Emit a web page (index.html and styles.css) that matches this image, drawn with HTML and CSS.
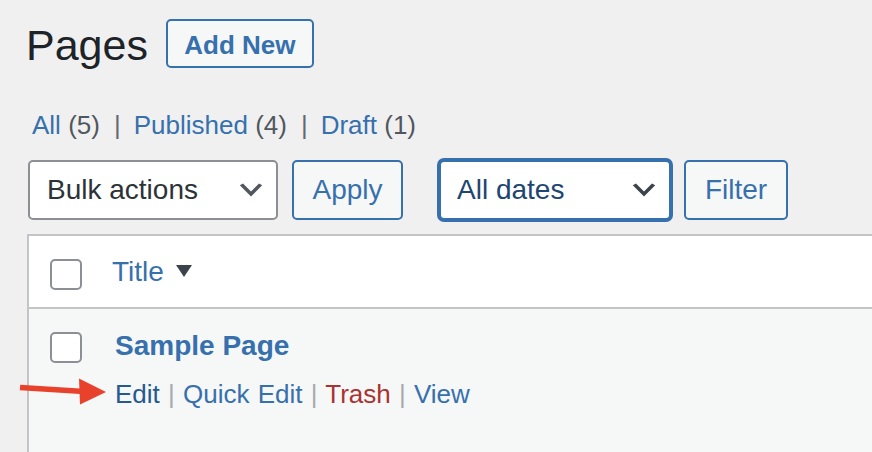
FILE: index.html
```html
<!DOCTYPE html>
<html lang="en">
<head>
<meta charset="utf-8">
<title>Pages</title>
<link rel="stylesheet" href="styles.css">
</head>
<body>
<div class="wrap">
  <div class="page-header">
    <h1 class="page-title">Pages</h1>
    <a class="btn-add">Add New</a>
  </div>
  <ul class="subsubsub">
    <li><a class="link">All</a> <span class="count">(5)</span></li>
    <li class="sep">|</li>
    <li><a class="link">Published</a> <span class="count">(4)</span></li>
    <li class="sep">|</li>
    <li><a class="link">Draft</a> <span class="count">(1)</span></li>
  </ul>
  <div class="tablenav">
    <div class="select bulk">
      <span>Bulk actions</span>
      <svg class="chev" viewBox="0 0 20 20" width="32" height="32"><path d="M5 6l5 5 5-5 2 1-7 7-7-7 2-1z"/></svg>
    </div>
    <button class="btn apply">Apply</button>
    <div class="select dates">
      <span>All dates</span>
      <svg class="chev" viewBox="0 0 20 20" width="32" height="32"><path d="M5 6l5 5 5-5 2 1-7 7-7-7 2-1z"/></svg>
    </div>
    <button class="btn filter">Filter</button>
  </div>
  <div class="table">
    <div class="thead">
      <span class="cb"></span>
      <a class="col-title">Title <svg class="caret" viewBox="0 0 16 12" width="16" height="12"><polygon points="0,0 16,0 8,12"/></svg></a>
    </div>
    <div class="row">
      <span class="cb"></span>
      <div class="row-main">
        <a class="row-title">Sample Page</a>
        <div class="row-actions"><a class="edit">Edit</a> | <a class="link">Quick Edit</a> | <a class="trash">Trash</a> | <a class="link">View</a></div>
      </div>
    </div>
  </div>
</div>
<svg class="arrow" viewBox="0 0 94 34" width="94" height="34">
  <line x1="4" y1="13.5" x2="68" y2="17.6" stroke="#e8412c" stroke-width="5.5"/>
  <polygon points="63,4.5 90,18 64,30.5" fill="#e8412c"/>
</svg>
</body>
</html>
```

FILE: styles.css
```css
html, body {
  margin: 0;
  padding: 0;
}

body {
  background: #f0f0f1;
  font-family: "Liberation Sans", Arial, sans-serif;
  color: #3c434a;
  overflow: hidden;
  width: 872px;
  height: 452px;
  position: relative;
}

.wrap {
  box-sizing: border-box;
  height: 452px;
  display: flex;
  flex-direction: column;
  padding: 19px 0 0 27px;
}

.page-header {
  display: flex;
  align-items: flex-start;
  height: 49px;
  flex: none;
}

.page-title {
  margin: 0 0 0 -1px;
  font-size: 43px;
  font-weight: 400;
  line-height: 52px;
  color: #1d2327;
}

.btn-add {
  box-sizing: border-box;
  height: 49px;
  width: 148px;
  margin-left: 18px;
  padding: 3px 0 0;
  border: 2px solid #3670ad;
  border-radius: 5px;
  background: #f6f7f7;
  color: #3670ad;
  font-size: 26px;
  font-weight: 700;
  line-height: 42px;
  text-align: center;
}

.subsubsub {
  list-style: none;
  margin: 42px 0 0 5px;
  padding: 0;
  display: flex;
  font-size: 26px;
  line-height: 30px;
  color: #646970;
  flex: none;
}

.link {
  color: #3670ad;
}

.count {
  color: #50575e;
}

.sep {
  margin: 0 13px 0 14px;
  color: #646970;
}

.tablenav {
  display: flex;
  align-items: center;
  height: 60px;
  margin: 20px 0 0 1px;
  flex: none;
}

.select {
  box-sizing: border-box;
  height: 60px;
  display: flex;
  align-items: center;
  justify-content: space-between;
  background: #fff;
  border-radius: 5px;
  font-size: 28px;
}

.select .chev {
  fill: #50575e;
}

.bulk {
  width: 250px;
  border: 2px solid #8c8f94;
  padding: 0 9px 0 17px;
  color: #2c3338;
}

.dates {
  width: 232px;
  margin-left: 36px;
  border: 2px solid #3670ad;
  box-shadow: 0 0 0 2px #3670ad;
  padding: 0 9px 0 16px;
  color: #1d4670;
}

.dates .chev {
  fill: #3c434a;
}

.btn {
  box-sizing: border-box;
  height: 60px;
  padding: 0;
  border: 2px solid #3670ad;
  border-radius: 5px;
  background: #f6f7f7;
  color: #3670ad;
  font-family: "Liberation Sans", Arial, sans-serif;
  font-size: 28px;
  text-align: center;
}

.apply {
  width: 111px;
  margin-left: 14px;
}

.filter {
  width: 104px;
  margin-left: 13px;
}

.table {
  flex: 1;
  display: flex;
  flex-direction: column;
  margin-top: 14px;
  border-top: 2px solid #c3c4c7;
  border-left: 2px solid #c3c4c7;
}

.cb {
  box-sizing: border-box;
  flex: none;
  width: 32px;
  height: 31px;
  margin-top: 23px;
  border: 2px solid #8c8f94;
  border-radius: 5px;
  background: #fff;
}

.thead {
  display: flex;
  align-items: flex-start;
  height: 71px;
  flex: none;
  padding-left: 21px;
  background: #fff;
  border-bottom: 2px solid #c3c4c7;
}

.col-title {
  display: flex;
  align-items: center;
  gap: 12px;
  margin-left: 30px;
  font-size: 28px;
  line-height: 72px;
  color: #3670ad;
}

.caret {
  fill: #3c434a;
  margin-top: -2px;
}

.row {
  flex: 1;
  display: flex;
  align-items: flex-start;
  padding-left: 21px;
  background: #f6f7f7;
}

.row-main {
  margin-left: 33px;
  padding-top: 19px;
}

.row-title {
  display: block;
  font-size: 28px;
  font-weight: 700;
  line-height: 36px;
  color: #3670ad;
}

.row-actions {
  margin-top: 12px;
  font-size: 26px;
  line-height: 36px;
  color: #a7aaad;
  word-spacing: 1px;
}

.row-actions .edit {
  color: #255a91;
}

.row-actions .trash {
  color: #aa3232;
}

.arrow {
  position: absolute;
  left: 16px;
  top: 374px;
}
```
